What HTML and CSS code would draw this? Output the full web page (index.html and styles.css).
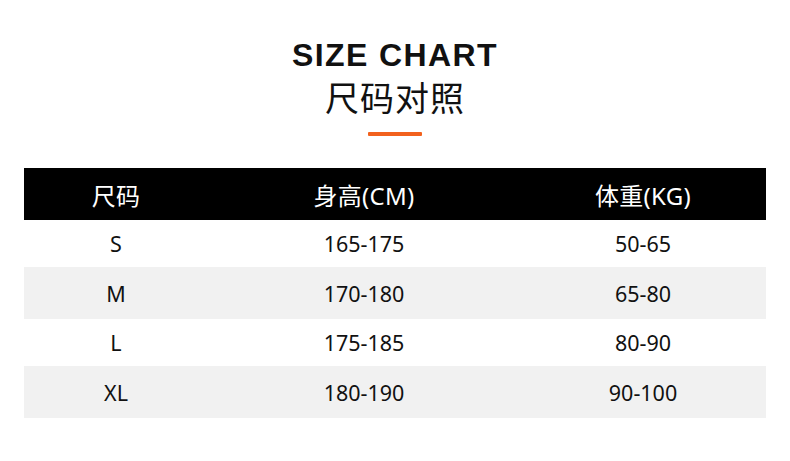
FILE: index.html
```html
<!DOCTYPE html>
<html lang="zh">
<head>
<meta charset="utf-8">
<title>Size Chart</title>
<link rel="stylesheet" href="styles.css">
</head>
<body>
<div class="page">
  <header class="head">
    <h1 class="title-en">SIZE CHART</h1>
    <h2 class="title-zh">尺码对照</h2>
    <div class="accent"></div>
  </header>
  <div class="table">
    <div class="row row-head">
      <div class="c1">尺码</div><div class="c2">身高(CM)</div><div class="c3">体重(KG)</div>
    </div>
    <div class="row row-a">
      <div class="c1">S</div><div class="c2">165-175</div><div class="c3">50-65</div>
    </div>
    <div class="row row-b">
      <div class="c1">M</div><div class="c2">170-180</div><div class="c3">65-80</div>
    </div>
    <div class="row row-a">
      <div class="c1">L</div><div class="c2">175-185</div><div class="c3">80-90</div>
    </div>
    <div class="row row-b">
      <div class="c1">XL</div><div class="c2">180-190</div><div class="c3">90-100</div>
    </div>
  </div>
</div>
</body>
</html>
```
FILE: styles.css
```css
* { box-sizing: border-box; margin: 0; padding: 0; }
html, body { background: #ffffff; }
body {
  width: 790px;
  height: 461px;
  overflow: hidden;
  font-family: "Noto Sans", "Noto Sans CJK SC", sans-serif;
  color: #111;
}
.page {
  padding: 36px 24px 0 24px;
}
.head {
  display: flex;
  flex-direction: column;
  align-items: center;
}
.title-en {
  font-family: "Liberation Sans", Arial, sans-serif;
  font-weight: 700;
  font-size: 32px;
  line-height: 38px;
  letter-spacing: 1.4px;
  color: #111;
}
.title-zh {
  font-family: "Noto Sans CJK SC", sans-serif;
  font-weight: 400;
  font-size: 34px;
  line-height: 46px;
  margin-top: 0;
  letter-spacing: 1px;
  color: #111;
}
.accent {
  width: 54px;
  height: 4px;
  background: #f2611d;
  margin-top: 12px;
  border-radius: 1px;
}
.table {
  margin-top: 32px;
  width: 742px;
}
.row {
  display: grid;
  grid-template-columns: 184px 312px 246px;
  align-items: center;
  text-align: center;
  font-size: 21.5px;
}
.row-head {
  background: #000;
  color: #fff;
  height: 52px;
  font-size: 24px;
  letter-spacing: 0.3px;
}
.row-a { background: #fff; height: 47px; }
.row-b { background: #f1f1f1; height: 52px; }
.row-a, .row-b { color: #111; }
```
